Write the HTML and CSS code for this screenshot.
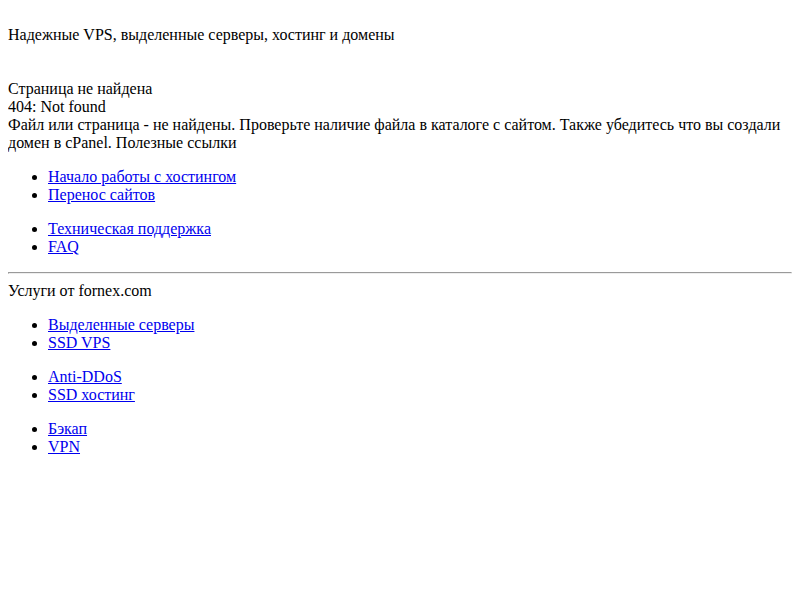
FILE: index.html
```html
<!DOCTYPE html>
<html lang="ru">
<head>
<meta charset="utf-8">
<title>404: Not found</title>
<link rel="stylesheet" href="styles.css">
</head>
<body class="page">
<div class="intro"><br>Надежные VPS, выделенные серверы, хостинг и домены<br><br><br>Страница не найдена<br>404: Not found<br>Файл или страница - не найдены. Проверьте наличие файла в каталоге с сайтом. Также убедитесь что вы создали домен в cPanel. Полезные ссылки</div>
<ul class="links">
<li><a href="#">Начало работы с хостингом</a></li>
<li><a href="#">Перенос сайтов</a></li>
</ul>
<ul class="links">
<li><a href="#">Техническая поддержка</a></li>
<li><a href="#">FAQ</a></li>
</ul>
<hr class="sep">
<div class="services">Услуги от fornex.com</div>
<ul class="links">
<li><a href="#">Выделенные серверы</a></li>
<li><a href="#">SSD VPS</a></li>
</ul>
<ul class="links">
<li><a href="#">Anti-DDoS</a></li>
<li><a href="#">SSD хостинг</a></li>
</ul>
<ul class="links">
<li><a href="#">Бэкап</a></li>
<li><a href="#">VPN</a></li>
</ul>
</body>
</html>
```
FILE: styles.css
```css
.page {
  margin: 8px;
  font-family: "Liberation Serif", "Times New Roman", serif;
  font-size: 16px;
  color: #000;
  background: #fff;
}
.links {
  margin: 16px 0;
  padding-left: 40px;
}
.links a {
  color: #0000ee;
}
.sep {
  margin: 8px 0;
}
```
